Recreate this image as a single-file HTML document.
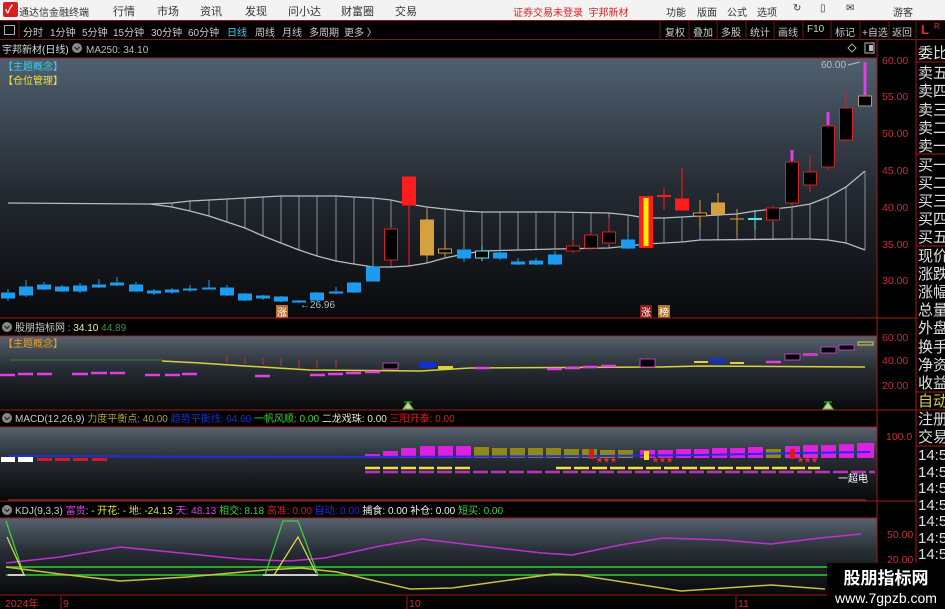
<!DOCTYPE html>
<html><head><meta charset="utf-8">
<style>
*{margin:0;padding:0;box-sizing:border-box}
body{width:945px;height:609px;overflow:hidden;background:#000;font-family:"Liberation Sans","Noto Sans CJK SC",sans-serif;position:relative}
.menu{position:absolute;left:0;top:0;width:945px;height:20px;background:#f3f3f3;font-size:11px;color:#333}
.menu span{position:absolute;top:3px;white-space:nowrap}
.tb{position:absolute;left:0;top:20px;width:945px;height:20px;background:#000;border-top:1px solid #7a1a1a;border-bottom:1px solid #7a1a1a;font-size:10px;color:#ccc}
.tb span{position:absolute;top:3px;white-space:nowrap}
svg{position:absolute;left:0;top:0}
</style></head><body>
<div class="menu">
<div style="position:absolute;left:3px;top:2px;width:15px;height:15px;background:#d81e1e;border-radius:2px"></div>
<span style="left:5px;top:1px;color:#fff;font-size:11px;font-weight:bold">✓</span>
<span style="left:19px;font-size:10px;top:4px">通达信金融终端</span>
<span style="left:113px">行情</span>
<span style="left:157px">市场</span>
<span style="left:200px">资讯</span>
<span style="left:245px">发现</span>
<span style="left:288px">问小达</span>
<span style="left:341px">财富圈</span>
<span style="left:395px">交易</span>
<span style="left:513px;color:#e02020;font-size:10px;top:4px">证券交易未登录&nbsp; 宇邦新材</span>
<span style="left:666px;font-size:10px;top:4px">功能</span>
<span style="left:697px;font-size:10px;top:4px">版面</span>
<span style="left:727px;font-size:10px;top:4px">公式</span>
<span style="left:757px;font-size:10px;top:4px">选项</span>
<span style="left:793px;font-size:10px">↻</span>
<span style="left:820px;font-size:10px">▯</span>
<span style="left:846px;font-size:10px">✉</span>
<span style="left:893px;font-size:10px;top:4px">游客</span>
</div>
<div class="tb">
<div style="position:absolute;left:4px;top:4px;width:11px;height:10px;border:1px solid #aaa"></div>
<span style="left:23px">分时</span><span style="left:50px">1分钟</span><span style="left:82px">5分钟</span><span style="left:113px">15分钟</span><span style="left:151px">30分钟</span><span style="left:188px">60分钟</span><span style="left:227px;color:#4ad0f0">日线</span><span style="left:255px">周线</span><span style="left:282px">月线</span><span style="left:309px">多周期</span><span style="left:344px">更多 〉</span>
<span style="left:665px">复权</span><span style="left:693px">叠加</span><span style="left:721px">多股</span><span style="left:750px">统计</span><span style="left:778px">画线</span><span style="left:807px">F10</span><span style="left:835px">标记</span><span style="left:862px">+自选</span><span style="left:892px">返回</span>
<span style="left:921px;color:#e03030;font-weight:bold;font-size:13px;top:1px">L</span><span style="left:934px;color:#e03030;font-size:8px;top:1px">R</span>
</div>
<svg width="945" height="609" viewBox="0 0 945 609" style="top:0">
<defs>
<linearGradient id="g1" x1="0" y1="0" x2="0" y2="1"><stop offset="0" stop-color="#506070"/><stop offset="0.5" stop-color="#252b33"/><stop offset="1" stop-color="#08090b"/></linearGradient>
<linearGradient id="g2" x1="0" y1="0" x2="0" y2="1"><stop offset="0" stop-color="#56626e"/><stop offset="0.45" stop-color="#262c33"/><stop offset="1" stop-color="#08090b"/></linearGradient>
</defs>
<g stroke="#6a1616"><line x1="660" y1="21" x2="660" y2="40"/><line x1="689" y1="21" x2="689" y2="40"/><line x1="717" y1="21" x2="717" y2="40"/><line x1="746" y1="21" x2="746" y2="40"/><line x1="774" y1="21" x2="774" y2="40"/><line x1="803" y1="21" x2="803" y2="40"/><line x1="831" y1="21" x2="831" y2="40"/><line x1="860" y1="21" x2="860" y2="40"/><line x1="889" y1="21" x2="889" y2="40"/><line x1="916" y1="21" x2="916" y2="40"/><line x1="19" y1="21" x2="19" y2="40"/></g>
<text x="2" y="53" fill="#ddd" font-size="10">宇邦新材(日线)</text>
<circle cx="77" cy="48" r="5" fill="#888"/><path d="M74.5 47l2.5 2.5 2.5-2.5" stroke="#222" fill="none" stroke-width="1.2"/>
<text x="86" y="53" fill="#bbb" font-size="10">MA250: 34.10</text>
<path d="M852 44l4 4-4 4-4-4z" fill="none" stroke="#aaa"/>
<rect x="865" y="43" width="9" height="10" fill="none" stroke="#bbb"/><rect x="869" y="45" width="4" height="6" fill="#bbb"/>

<rect x="0" y="58" width="877" height="260" fill="url(#g1)"/>
<text x="3" y="70" fill="#3ad0f0" font-size="10">【主题概念】</text>
<text x="3" y="84" fill="#f0e040" font-size="10">【仓位管理】</text>
<g stroke="#8a9098" stroke-width="1">
<line x1="172" y1="203" x2="172" y2="207"/><line x1="190" y1="201" x2="190" y2="211"/><line x1="209" y1="200" x2="209" y2="216"/><line x1="227" y1="199" x2="227" y2="222"/><line x1="245" y1="198" x2="245" y2="228"/><line x1="263" y1="197" x2="263" y2="236"/><line x1="281" y1="196" x2="281" y2="243"/><line x1="299" y1="196" x2="299" y2="250"/><line x1="317" y1="196" x2="317" y2="256"/><line x1="336" y1="196" x2="336" y2="261"/><line x1="354" y1="197" x2="354" y2="264"/><line x1="373" y1="198" x2="373" y2="267"/><line x1="391" y1="200" x2="391" y2="267"/><line x1="409" y1="204" x2="409" y2="266"/><line x1="427" y1="207" x2="427" y2="263"/><line x1="445" y1="209" x2="445" y2="258"/><line x1="464" y1="211" x2="464" y2="254"/><line x1="482" y1="212" x2="482" y2="251"/><line x1="500" y1="212" x2="500" y2="251"/><line x1="518" y1="212" x2="518" y2="250"/><line x1="536" y1="212" x2="536" y2="250"/><line x1="555" y1="212" x2="555" y2="249"/><line x1="573" y1="213" x2="573" y2="249"/><line x1="591" y1="213" x2="591" y2="248"/><line x1="609" y1="213" x2="609" y2="248"/><line x1="628" y1="215" x2="628" y2="246"/><line x1="664" y1="218" x2="664" y2="243"/><line x1="682" y1="217" x2="682" y2="242"/><line x1="700" y1="216" x2="700" y2="240"/><line x1="718" y1="215" x2="718" y2="240"/><line x1="737" y1="214" x2="737" y2="240"/><line x1="755" y1="211" x2="755" y2="240"/><line x1="773" y1="209" x2="773" y2="240"/><line x1="792" y1="207" x2="792" y2="239"/><line x1="810" y1="204" x2="810" y2="239"/><line x1="828" y1="197" x2="828" y2="240"/><line x1="846" y1="187" x2="846" y2="243"/><line x1="865" y1="171" x2="865" y2="250"/>
</g>
<polyline fill="none" stroke="#b8bcc2" stroke-width="1.3" points="8,203 150,204 172,203 190,201 209,200 227,199 245,198 263,197 281,196 336,196 354,197 373,198 391,200 409,204 427,207 445,209 464,211 482,212 555,212 609,213 628,215 646,218 664,218 682,217 700,216 718,215 737,214 755,211 773,209 792,207 810,204 828,197 846,187 865,171"/>
<polyline fill="none" stroke="#b8bcc2" stroke-width="1.3" points="150,204 172,207 190,211 209,216 227,222 245,228 263,236 281,243 299,250 317,256 336,261 354,264 373,267 391,267 409,266 427,263 445,258 464,254 482,251 518,250 555,249 609,248 628,246 646,244 664,243 682,242 700,240 792,239 810,239 828,240 846,243 865,250"/>
<g stroke="#1c9cf0" fill="#1c9cf0">
<line x1="8" y1="289" x2="8" y2="301"/><rect x="1.5" y="293" width="13" height="5"/>
<line x1="26" y1="280" x2="26" y2="297"/><rect x="19.5" y="287" width="13" height="8"/>
<line x1="44" y1="282" x2="44" y2="290"/><rect x="37.5" y="285" width="13" height="4"/>
<line x1="62" y1="285" x2="62" y2="292"/><rect x="55.5" y="287" width="13" height="4"/>
<line x1="80" y1="283" x2="80" y2="293"/><rect x="73.5" y="286" width="13" height="5"/>
<line x1="99" y1="279" x2="99" y2="288"/><rect x="92.5" y="285" width="13" height="2"/>
<line x1="117" y1="277" x2="117" y2="286"/><rect x="110.5" y="283" width="13" height="2"/>
<line x1="136" y1="282" x2="136" y2="292"/><rect x="129.5" y="285" width="13" height="6"/>
<line x1="154" y1="289" x2="154" y2="295"/><rect x="147.5" y="291" width="13" height="2"/>
<line x1="172" y1="288" x2="172" y2="294"/><rect x="165.5" y="290" width="13" height="2"/>
<line x1="190" y1="285" x2="190" y2="292"/><rect x="183.5" y="289" width="13" height="1"/>
<line x1="209" y1="280" x2="209" y2="289"/><rect x="202.5" y="288" width="13" height="1"/>
<line x1="227" y1="285" x2="227" y2="296"/><rect x="220.5" y="288" width="13" height="7"/>
<line x1="245" y1="293" x2="245" y2="301"/><rect x="238.5" y="294" width="13" height="6"/>
<line x1="263" y1="295" x2="263" y2="300"/><rect x="256.5" y="296" width="13" height="2"/>
<line x1="281" y1="296" x2="281" y2="302"/><rect x="274.5" y="297" width="13" height="4"/>
<line x1="299" y1="300" x2="299" y2="303"/><rect x="292.5" y="301" width="13" height="1"/>
<line x1="317" y1="292" x2="317" y2="301"/><rect x="310.5" y="293" width="13" height="7"/>
<line x1="336" y1="287" x2="336" y2="294"/><rect x="329.5" y="292" width="13" height="1"/>
<line x1="354" y1="282" x2="354" y2="293"/><rect x="347.5" y="283" width="13" height="9"/>
<rect x="366.5" y="267" width="13" height="14"/>
<line x1="464" y1="247" x2="464" y2="262"/><rect x="457.5" y="250" width="13" height="8"/>
<line x1="500" y1="250" x2="500" y2="260"/><rect x="493.5" y="253" width="13" height="5"/>
<line x1="518" y1="258" x2="518" y2="265"/><rect x="511.5" y="262" width="13" height="2"/>
<line x1="536" y1="258" x2="536" y2="265"/><rect x="529.5" y="261" width="13" height="3"/>
<line x1="555" y1="251" x2="555" y2="265"/><rect x="548.5" y="255" width="13" height="9"/>
<line x1="628" y1="232" x2="628" y2="249"/><rect x="621.5" y="240" width="13" height="8"/>
</g>
<g stroke="#d42424" fill="#000">
<line x1="391" y1="227" x2="391" y2="266"/><rect x="384.5" y="229" width="13" height="31"/>
<line x1="573" y1="240" x2="573" y2="253"/><rect x="566.5" y="246" width="13" height="5"/>
<line x1="591" y1="232" x2="591" y2="250"/><rect x="584.5" y="235" width="13" height="13"/>
<line x1="609" y1="218" x2="609" y2="245"/><rect x="602.5" y="232" width="13" height="11"/>
<line x1="773" y1="206" x2="773" y2="222"/><rect x="766.5" y="208" width="13" height="12"/>
<line x1="792" y1="203" x2="792" y2="206"/><rect x="785.5" y="162" width="13" height="41"/>
<line x1="810" y1="155" x2="810" y2="192"/><rect x="803.5" y="172" width="13" height="13"/>
<line x1="828" y1="167" x2="828" y2="170"/><rect x="821.5" y="126" width="13" height="41"/>
<line x1="846" y1="92" x2="846" y2="108"/><rect x="839.5" y="108" width="13" height="32"/>
</g>
<g stroke="#e040e0" stroke-width="3"><line x1="792" y1="150" x2="792" y2="161"/><line x1="828" y1="112" x2="828" y2="125"/><line x1="865" y1="62" x2="865" y2="95"/></g>
<rect x="858.5" y="96" width="13" height="10" fill="#000" stroke="#b89868"/>
<g stroke="#ff1c1c" fill="#ff1c1c">
<line x1="409" y1="177" x2="409" y2="265"/><rect x="402.5" y="177" width="13" height="28"/>
<line x1="682" y1="168" x2="682" y2="210"/><rect x="675.5" y="199" width="13" height="11"/>
<line x1="664" y1="188" x2="664" y2="210"/><line x1="657" y1="196" x2="671" y2="196" stroke-width="2"/>
</g>
<rect x="639" y="196" width="14" height="52" fill="#ff1c1c"/><rect x="643.5" y="198" width="5" height="48" fill="#ffee00"/>
<g stroke="#d4a040" fill="#d4a040">
<line x1="427" y1="210" x2="427" y2="258"/><rect x="420.5" y="220" width="13" height="35"/>
<line x1="718" y1="193" x2="718" y2="215"/><rect x="711.5" y="203" width="13" height="11"/>
<line x1="737" y1="209" x2="737" y2="235"/><line x1="730" y1="219" x2="744" y2="219"/>
<line x1="445" y1="240" x2="445" y2="256"/><rect x="438.5" y="249" width="13" height="4" fill="#000"/>
<line x1="700" y1="200" x2="700" y2="228"/><rect x="693.5" y="213" width="13" height="3" fill="#000"/>
</g>
<g stroke="#60e0e8"><line x1="482" y1="246" x2="482" y2="261"/><rect x="475.5" y="251" width="13" height="7" fill="#000"/><line x1="755" y1="210" x2="755" y2="230"/><line x1="748" y1="219" x2="762" y2="219" stroke-width="2"/></g>
<text x="821" y="68" fill="#bbb" font-size="10">60.00</text><path d="M848 65l12-3" stroke="#bbb"/>
<text x="300" y="308" fill="#bbb" font-size="10">←26.96</text>
<rect x="276" y="305" width="12" height="13" fill="#c07030"/><text x="277" y="316" fill="#fff" font-size="10">涨</text>
<rect x="640" y="305" width="12" height="13" fill="#901818"/><text x="641" y="316" fill="#fff" font-size="10">涨</text>
<rect x="658" y="305" width="12" height="13" fill="#b07828"/><text x="659" y="316" fill="#fff" font-size="10">榜</text>

<rect x="0" y="336" width="877" height="74" fill="url(#g2)"/>
<circle cx="7" cy="327" r="5" fill="#888"/><path d="M4.5 326l2.5 2.5 2.5-2.5" stroke="#222" fill="none" stroke-width="1.2"/>
<text x="15" y="331" fill="#ccc" font-size="10">股朋指标网 : <tspan fill="#f0f0a0">34.10</tspan> <tspan fill="#409040">44.89</tspan></text>
<text x="3" y="347" fill="#f0a020" font-size="10">【主题概念】</text>
<line x1="10" y1="360" x2="162" y2="360" stroke="#2a8a2a"/>
<polyline fill="none" stroke="#d8d040" stroke-width="1.5" points="162,361 200,363 245,366 310,370 420,371 470,368 660,367 700,366 865,367"/>
<g stroke="#e040e0" stroke-width="2.5"><line x1="0" y1="375" x2="15" y2="375"/><line x1="18" y1="374" x2="33" y2="374"/><line x1="37" y1="374" x2="52" y2="374"/><line x1="72" y1="374" x2="88" y2="374"/><line x1="91" y1="373" x2="107" y2="373"/><line x1="110" y1="373" x2="125" y2="373"/><line x1="145" y1="375" x2="160" y2="375"/><line x1="165" y1="375" x2="180" y2="375"/><line x1="182" y1="374" x2="197" y2="374"/><line x1="255" y1="376" x2="270" y2="376"/><line x1="310" y1="375" x2="325" y2="375"/><line x1="328" y1="374" x2="343" y2="374"/><line x1="346" y1="373" x2="361" y2="373"/><line x1="365" y1="372" x2="380" y2="372"/><line x1="475" y1="368" x2="490" y2="368"/><line x1="547" y1="369" x2="562" y2="369"/><line x1="565" y1="368" x2="580" y2="368"/><line x1="583" y1="367" x2="598" y2="367"/><line x1="601" y1="366" x2="616" y2="366"/><line x1="766" y1="362" x2="781" y2="362"/></g>
<rect x="383" y="363" width="15" height="6" fill="#000" stroke="#c040c0"/><rect x="420" y="362" width="15" height="6" fill="#1030d0"/><rect x="438" y="366" width="15" height="3" fill="#e0d040"/>
<rect x="640" y="359" width="15" height="8" fill="#000" stroke="#c040c0"/><rect x="710" y="359" width="15" height="4" fill="#1030d0"/><rect x="694" y="361" width="14" height="2" fill="#e0d040"/><rect x="730" y="362" width="14" height="2" fill="#e0d040"/>
<rect x="785" y="354" width="15" height="6" fill="#000" stroke="#c040c0"/><rect x="803" y="353" width="15" height="3" fill="#c040c0"/><rect x="821" y="347" width="15" height="6" fill="#000" stroke="#c040c0"/><rect x="839" y="345" width="15" height="5" fill="#000" stroke="#c040c0"/><rect x="858" y="342" width="15" height="3" fill="none" stroke="#e0d040"/>
<g stroke="#c03030"><line x1="227" y1="355" x2="227" y2="363"/><line x1="245" y1="358" x2="245" y2="364"/><line x1="263" y1="358" x2="263" y2="365"/><line x1="281" y1="358" x2="281" y2="366"/><line x1="299" y1="360" x2="299" y2="368"/><line x1="317" y1="360" x2="317" y2="368"/><line x1="336" y1="360" x2="336" y2="368"/></g>
<path d="M404 402h8M408 402l-5 7h10z" stroke="#30d030" fill="#e8c0a0"/>
<path d="M824 402h8M828 402l-5 7h10z" stroke="#30d030" fill="#e8c0a0"/>

<circle cx="7" cy="418" r="5" fill="#888"/><path d="M4.5 417l2.5 2.5 2.5-2.5" stroke="#222" fill="none" stroke-width="1.2"/>
<text x="15" y="422" fill="#ccc" font-size="10">MACD(12,26,9) <tspan fill="#b0a040">力度平衡点: 40.00</tspan> <tspan fill="#1830d0">趋势平衡线: 64.60</tspan> <tspan fill="#40d040">一帆风顺: 0.00</tspan> <tspan fill="#e8e8c0">二龙戏珠: 0.00</tspan> <tspan fill="#d02020">三阳开泰: 0.00</tspan></text>
<rect x="0" y="427" width="877" height="73" fill="url(#g2)"/>
<g fill="#e020e0"><rect x="365" y="454" width="15" height="4"/><rect x="383" y="451" width="15" height="7"/><rect x="401" y="448" width="15" height="10"/><rect x="420" y="446" width="15" height="12"/><rect x="438" y="446" width="15" height="12"/><rect x="456" y="446" width="15" height="12"/><rect x="640" y="450" width="15" height="8"/><rect x="658" y="450" width="15" height="8"/><rect x="676" y="449" width="15" height="9"/><rect x="694" y="449" width="15" height="9"/><rect x="712" y="448" width="15" height="10"/><rect x="730" y="448" width="15" height="10"/><rect x="748" y="447" width="15" height="11"/><rect x="785" y="446" width="15" height="12"/><rect x="803" y="445" width="15" height="13"/><rect x="821" y="445" width="15" height="13"/><rect x="839" y="444" width="15" height="14"/><rect x="857" y="443" width="17" height="15"/></g>
<g fill="#908818"><rect x="474" y="447" width="15" height="11"/><rect x="492" y="448" width="15" height="10"/><rect x="510" y="448" width="15" height="10"/><rect x="528" y="448" width="15" height="10"/><rect x="546" y="448" width="15" height="10"/><rect x="564" y="449" width="15" height="9"/><rect x="582" y="449" width="15" height="9"/><rect x="600" y="450" width="15" height="8"/><rect x="618" y="450" width="15" height="8"/><rect x="766" y="449" width="15" height="9"/></g>
<polyline fill="none" stroke="#2030e0" stroke-width="2" points="8,456 360,457 600,456 700,455 800,453 870,452"/>
<rect x="1" y="457" width="14" height="5" fill="#fff"/><rect x="18" y="457" width="15" height="5" fill="#fff"/>
<g fill="#e01818"><rect x="37" y="458" width="15" height="3"/><rect x="55" y="458" width="15" height="3"/><rect x="73" y="458" width="15" height="3"/><rect x="92" y="458" width="15" height="3"/><rect x="589" y="449" width="5" height="10"/><rect x="790" y="449" width="5" height="10"/></g>
<rect x="644" y="451" width="5" height="9" fill="#ffe020"/>
<text x="596" y="462" fill="#e03030" font-size="7">★★★</text><text x="652" y="462" fill="#e03030" font-size="7">★★★</text><text x="797" y="462" fill="#e03030" font-size="7">★★★</text>
<g stroke="#f0e040" stroke-width="2.5" stroke-dasharray="15 3"><line x1="365" y1="468" x2="470" y2="468"/><line x1="556" y1="468" x2="820" y2="468"/></g>
<g stroke="#c030c0" stroke-width="2.5" stroke-dasharray="15 3"><line x1="383" y1="472" x2="875" y2="472"/><line x1="365" y1="472" x2="380" y2="472"/></g>
<text x="838" y="482" fill="#fff" font-size="10">一超电</text>
<line x1="8" y1="500" x2="866" y2="500" stroke="#5a2a20" stroke-width="2"/>

<circle cx="7" cy="510" r="5" fill="#888"/><path d="M4.5 509l2.5 2.5 2.5-2.5" stroke="#222" fill="none" stroke-width="1.2"/>
<text x="15" y="514" fill="#ccc" font-size="10">KDJ(9,3,3) <tspan fill="#e040e0">富贵</tspan><tspan fill="#ddd">: - </tspan><tspan fill="#e0e040">开花: - 地: -24.13</tspan> <tspan fill="#e040e0">天: 48.13</tspan> <tspan fill="#40d040">相交: 8.18</tspan> <tspan fill="#d02020">高准: 0.00</tspan> <tspan fill="#2030d0">自动: 0.00</tspan> <tspan fill="#eee">捕食: 0.00 补仓: 0.00</tspan> <tspan fill="#40d040">短买: 0.00</tspan></text>
<rect x="0" y="518" width="877" height="76" fill="url(#g2)"/>
<line x1="6" y1="567" x2="877" y2="567" stroke="#30d030" stroke-width="1.5"/>
<line x1="6" y1="575" x2="877" y2="575" stroke="#30d030" stroke-width="1.5"/>
<line x1="8" y1="575" x2="25" y2="575" stroke="#ccc" stroke-width="2"/><line x1="263" y1="575" x2="318" y2="575" stroke="#ccc" stroke-width="2"/>
<polyline fill="none" stroke="#c030d0" stroke-width="1.5" points="6,563 60,557 120,547 181,553 240,559 289,561 325,558 380,546 422,539 480,546 542,553 572,555 620,545 663,538 723,540 771,544 820,538 861,534"/>
<polyline fill="none" stroke="#c8c040" stroke-width="1.5" points="6,567 60,574 120,581 187,577 265,570 301,568 337,572 410,589 452,588 554,574 578,575 681,591 771,585 825,589"/>
<polyline fill="none" stroke="#40d040" stroke-width="1.2" points="6,521 24,575"/>
<polyline fill="none" stroke="#e0e040" stroke-width="1.2" points="7,537 24,575"/>
<polyline fill="none" stroke="#40d040" stroke-width="1.2" points="265,575 283,521 298,521 318,575"/>
<polyline fill="none" stroke="#e0e040" stroke-width="1.2" points="274,575 298,537 316,573"/>

<g stroke="#a01c1c"><line x1="0" y1="318" x2="917" y2="318"/><line x1="0" y1="336" x2="877" y2="336"/><line x1="0" y1="410" x2="917" y2="410"/><line x1="0" y1="427" x2="877" y2="427"/><line x1="0" y1="501" x2="917" y2="501"/><line x1="0" y1="518" x2="877" y2="518"/><line x1="0" y1="595" x2="917" y2="595"/><line x1="877" y1="40" x2="877" y2="609"/><line x1="916" y1="40" x2="916" y2="609"/><line x1="0" y1="58" x2="877" y2="58"/></g>
<g fill="#c83030" font-size="10.5">
<text x="882" y="64">60.00</text><text x="882" y="100">55.00</text><text x="882" y="137">50.00</text><text x="882" y="174">45.00</text><text x="882" y="211">40.00</text><text x="882" y="248">35.00</text><text x="882" y="284">30.00</text>
<text x="882" y="341">60.00</text><text x="882" y="364">40.00</text><text x="882" y="389">20.00</text>
<text x="886" y="440">100.0</text>
<text x="887" y="538">50.00</text><text x="887" y="563">20.00</text>
<text x="5" y="607">2024年</text><text x="63" y="607">9</text><text x="409" y="607">10</text><text x="738" y="607">11</text>
</g>
<g stroke="#a01c1c"><line x1="61" y1="596" x2="61" y2="609"/><line x1="407" y1="596" x2="407" y2="609"/><line x1="736" y1="596" x2="736" y2="609"/></g>
<g fill="#e0e0e0" font-size="15">
<text x="918" y="58">委比</text><text x="918" y="78">卖五</text><text x="918" y="96">卖四</text><text x="918" y="115">卖三</text><text x="918" y="133">卖二</text><text x="918" y="151">卖一</text><text x="918" y="170">买一</text><text x="918" y="188">买二</text><text x="918" y="206">买三</text><text x="918" y="224">买四</text><text x="918" y="242">买五</text><text x="918" y="261">现价</text><text x="918" y="279">涨跌</text><text x="918" y="297">涨幅</text><text x="918" y="315">总量</text><text x="918" y="333">外盘</text><text x="918" y="352">换手</text><text x="918" y="370">净资</text><text x="918" y="388">收益</text><text x="918" y="406" fill="#e0d040">自动</text><text x="918" y="424">注册</text><text x="918" y="442">交易</text>
<text x="918" y="460">14:56</text><text x="918" y="477">14:56</text><text x="918" y="493">14:56</text><text x="918" y="510">14:56</text><text x="918" y="526">14:56</text><text x="918" y="543">14:56</text><text x="918" y="559">14:56</text><text x="918" y="576">14:56</text><text x="918" y="592">14:56</text><text x="918" y="609">14:56</text>
</g>
<g stroke="#a01c1c"><line x1="916" y1="62" x2="945" y2="62"/><line x1="916" y1="154" x2="945" y2="154"/><line x1="916" y1="246" x2="945" y2="246"/><line x1="916" y1="392" x2="945" y2="392"/><line x1="916" y1="410" x2="945" y2="410"/><line x1="916" y1="446" x2="945" y2="446"/></g>
<rect x="827" y="563" width="118" height="46" fill="#000"/>
<text x="886" y="584" fill="#fff" font-size="17" font-weight="bold" text-anchor="middle">股朋指标网</text>
<text x="886" y="603" fill="#fff" font-size="14" text-anchor="middle">www.7gpzb.com</text>
</svg>
</body></html>
